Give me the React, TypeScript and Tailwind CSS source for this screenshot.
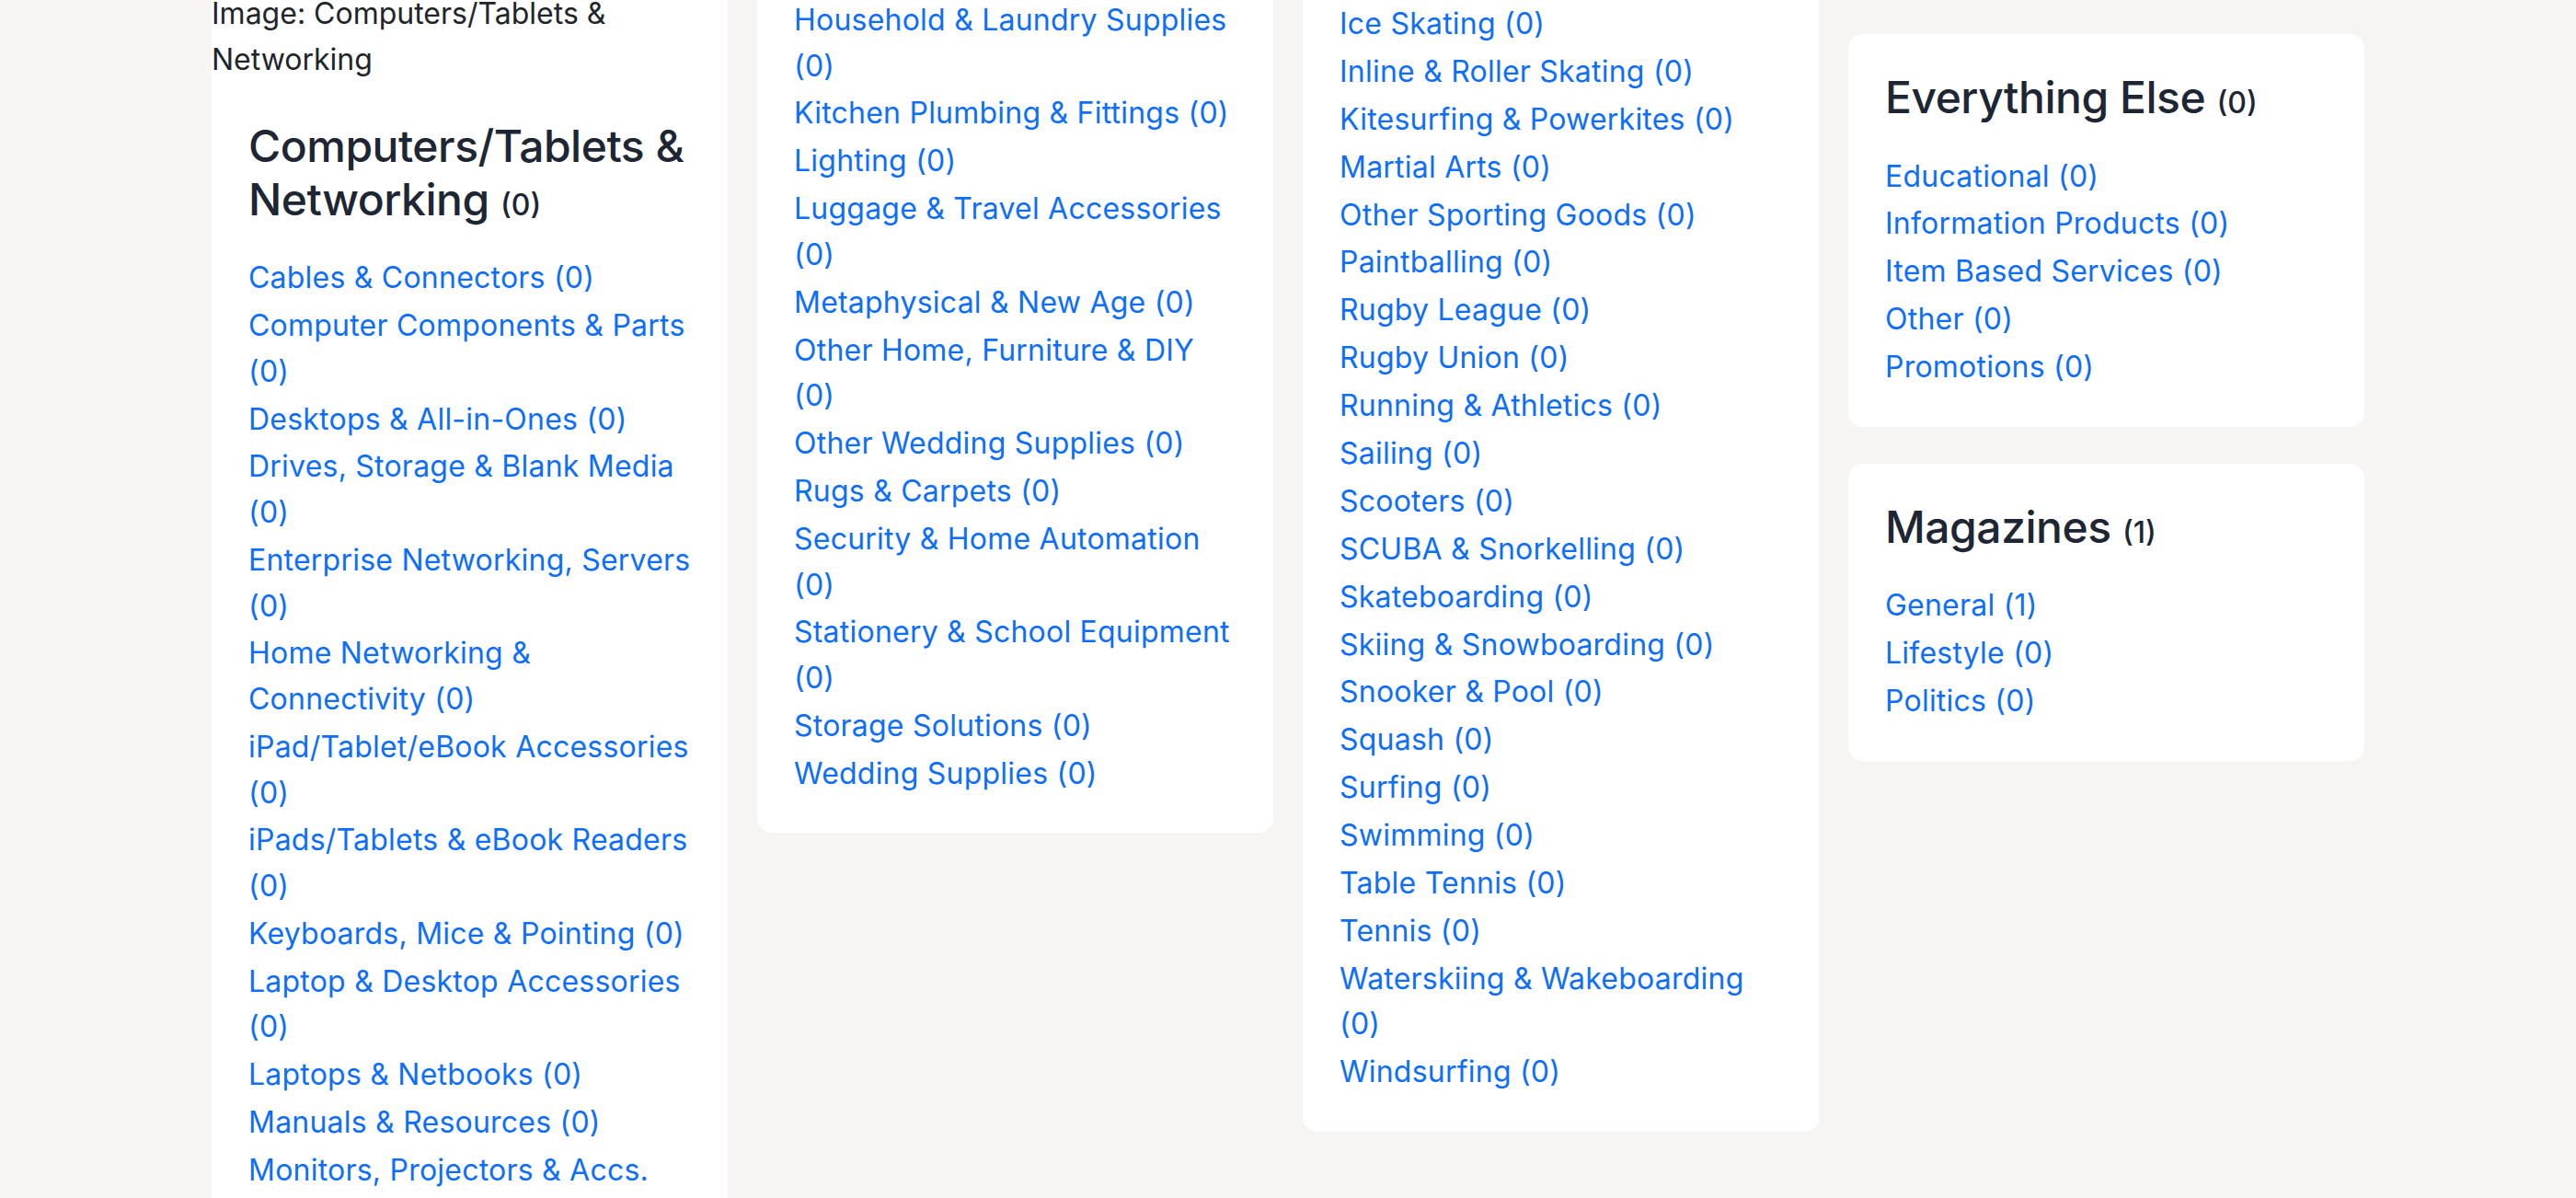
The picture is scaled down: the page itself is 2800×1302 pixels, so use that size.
import React from "react";

type Item = string[];

const col1: Item[] = [
  ["Cables & Connectors (0)"],
  ["Computer Components & Parts", "(0)"],
  ["Desktops & All-in-Ones (0)"],
  ["Drives, Storage & Blank Media", "(0)"],
  ["Enterprise Networking, Servers", "(0)"],
  ["Home Networking &", "Connectivity (0)"],
  ["iPad/Tablet/eBook Accessories", "(0)"],
  ["iPads/Tablets & eBook Readers", "(0)"],
  ["Keyboards, Mice & Pointing (0)"],
  ["Laptop & Desktop Accessories", "(0)"],
  ["Laptops & Netbooks (0)"],
  ["Manuals & Resources (0)"],
  ["Monitors, Projectors & Accs.", "(0)"],
  ["Printers, Scanners & Supplies", "(0)"],
];

const col2: Item[] = [
  ["Household & Laundry Supplies", "(0)"],
  ["Kitchen Plumbing & Fittings (0)"],
  ["Lighting (0)"],
  ["Luggage & Travel Accessories", "(0)"],
  ["Metaphysical & New Age (0)"],
  ["Other Home, Furniture & DIY", "(0)"],
  ["Other Wedding Supplies (0)"],
  ["Rugs & Carpets (0)"],
  ["Security & Home Automation", "(0)"],
  ["Stationery & School Equipment", "(0)"],
  ["Storage Solutions (0)"],
  ["Wedding Supplies (0)"],
];

const col3: Item[] = [
  ["Ice Skating (0)"],
  ["Inline & Roller Skating (0)"],
  ["Kitesurfing & Powerkites (0)"],
  ["Martial Arts (0)"],
  ["Other Sporting Goods (0)"],
  ["Paintballing (0)"],
  ["Rugby League (0)"],
  ["Rugby Union (0)"],
  ["Running & Athletics (0)"],
  ["Sailing (0)"],
  ["Scooters (0)"],
  ["SCUBA & Snorkelling (0)"],
  ["Skateboarding (0)"],
  ["Skiing & Snowboarding (0)"],
  ["Snooker & Pool (0)"],
  ["Squash (0)"],
  ["Surfing (0)"],
  ["Swimming (0)"],
  ["Table Tennis (0)"],
  ["Tennis (0)"],
  ["Waterskiing & Wakeboarding", "(0)"],
  ["Windsurfing (0)"],
];

const everything: Item[] = [
  ["Educational (0)"],
  ["Information Products (0)"],
  ["Item Based Services (0)"],
  ["Other (0)"],
  ["Promotions (0)"],
];

const magazines: Item[] = [["General (1)"], ["Lifestyle (0)"], ["Politics (0)"]];

function LinkList({ items }: { items: Item[] }) {
  return (
    <ul className="flex flex-col">
      {items.map((lines, i) => (
        <li
          key={i}
          className="mb-[2.3px] whitespace-nowrap text-[32px] leading-[49.6px] tracking-[0.007em] last:mb-0"
        >
          <a href="#" className="text-[#0d6efd]">
            {lines.map((l, j) => (
              <React.Fragment key={j}>
                {j > 0 && <br />}
                {l}
              </React.Fragment>
            ))}
          </a>
        </li>
      ))}
    </ul>
  );
}

function Heading({ lines, count }: { lines: string[]; count: string }) {
  return (
    <h4 className="mb-[32px] whitespace-nowrap text-[48px] font-medium leading-[57.6px] tracking-[-0.01em] text-[#1e2533]">
      {lines.map((l, j) => (
        <React.Fragment key={j}>
          {j > 0 && <br />}
          {l}
        </React.Fragment>
      ))}{" "}
      <span className="text-[32px] leading-[38px] tracking-normal">{count}</span>
    </h4>
  );
}

export default function App() {
  return (
    <div className="h-[1302px] overflow-hidden bg-[#f6f5f3] font-['Inter',sans-serif]">
      <div className="mx-auto flex w-[2340px] items-start gap-[32px]">
        {/* Column 1 */}
        <div className="-mt-[10px] flex w-[561px] flex-col">
          <div className="rounded-b-2xl bg-white pb-[40px]">
            <div className="text-[32px] leading-[50px] text-[#212529]">
              Image: Computers/Tablets &amp;
              <br />
              Networking
            </div>
            <div className="px-[40px] pt-[40px]">
              <Heading lines={["Computers/Tablets &", "Networking"]} count="(0)" />
              <LinkList items={col1} />
            </div>
          </div>
        </div>

        {/* Column 2 */}
        <div className="-mt-[3px] flex w-[561px] flex-col">
          <div className="rounded-b-2xl bg-white px-[40px] pb-[40px]">
            <LinkList items={col2} />
          </div>
        </div>

        {/* Column 3 */}
        <div className="flex w-[561px] flex-col">
          <div className="rounded-b-2xl bg-white px-[40px] pb-[40px] pt-[1px]">
            <LinkList items={col3} />
          </div>
        </div>

        {/* Column 4 */}
        <div className="flex w-[561px] flex-col gap-[40px] pt-[37px]">
          <div className="rounded-2xl bg-white p-[40px]">
            <Heading lines={["Everything Else"]} count="(0)" />
            <LinkList items={everything} />
          </div>
          <div className="rounded-2xl bg-white p-[40px]">
            <Heading lines={["Magazines"]} count="(1)" />
            <LinkList items={magazines} />
          </div>
        </div>
      </div>
    </div>
  );
}
